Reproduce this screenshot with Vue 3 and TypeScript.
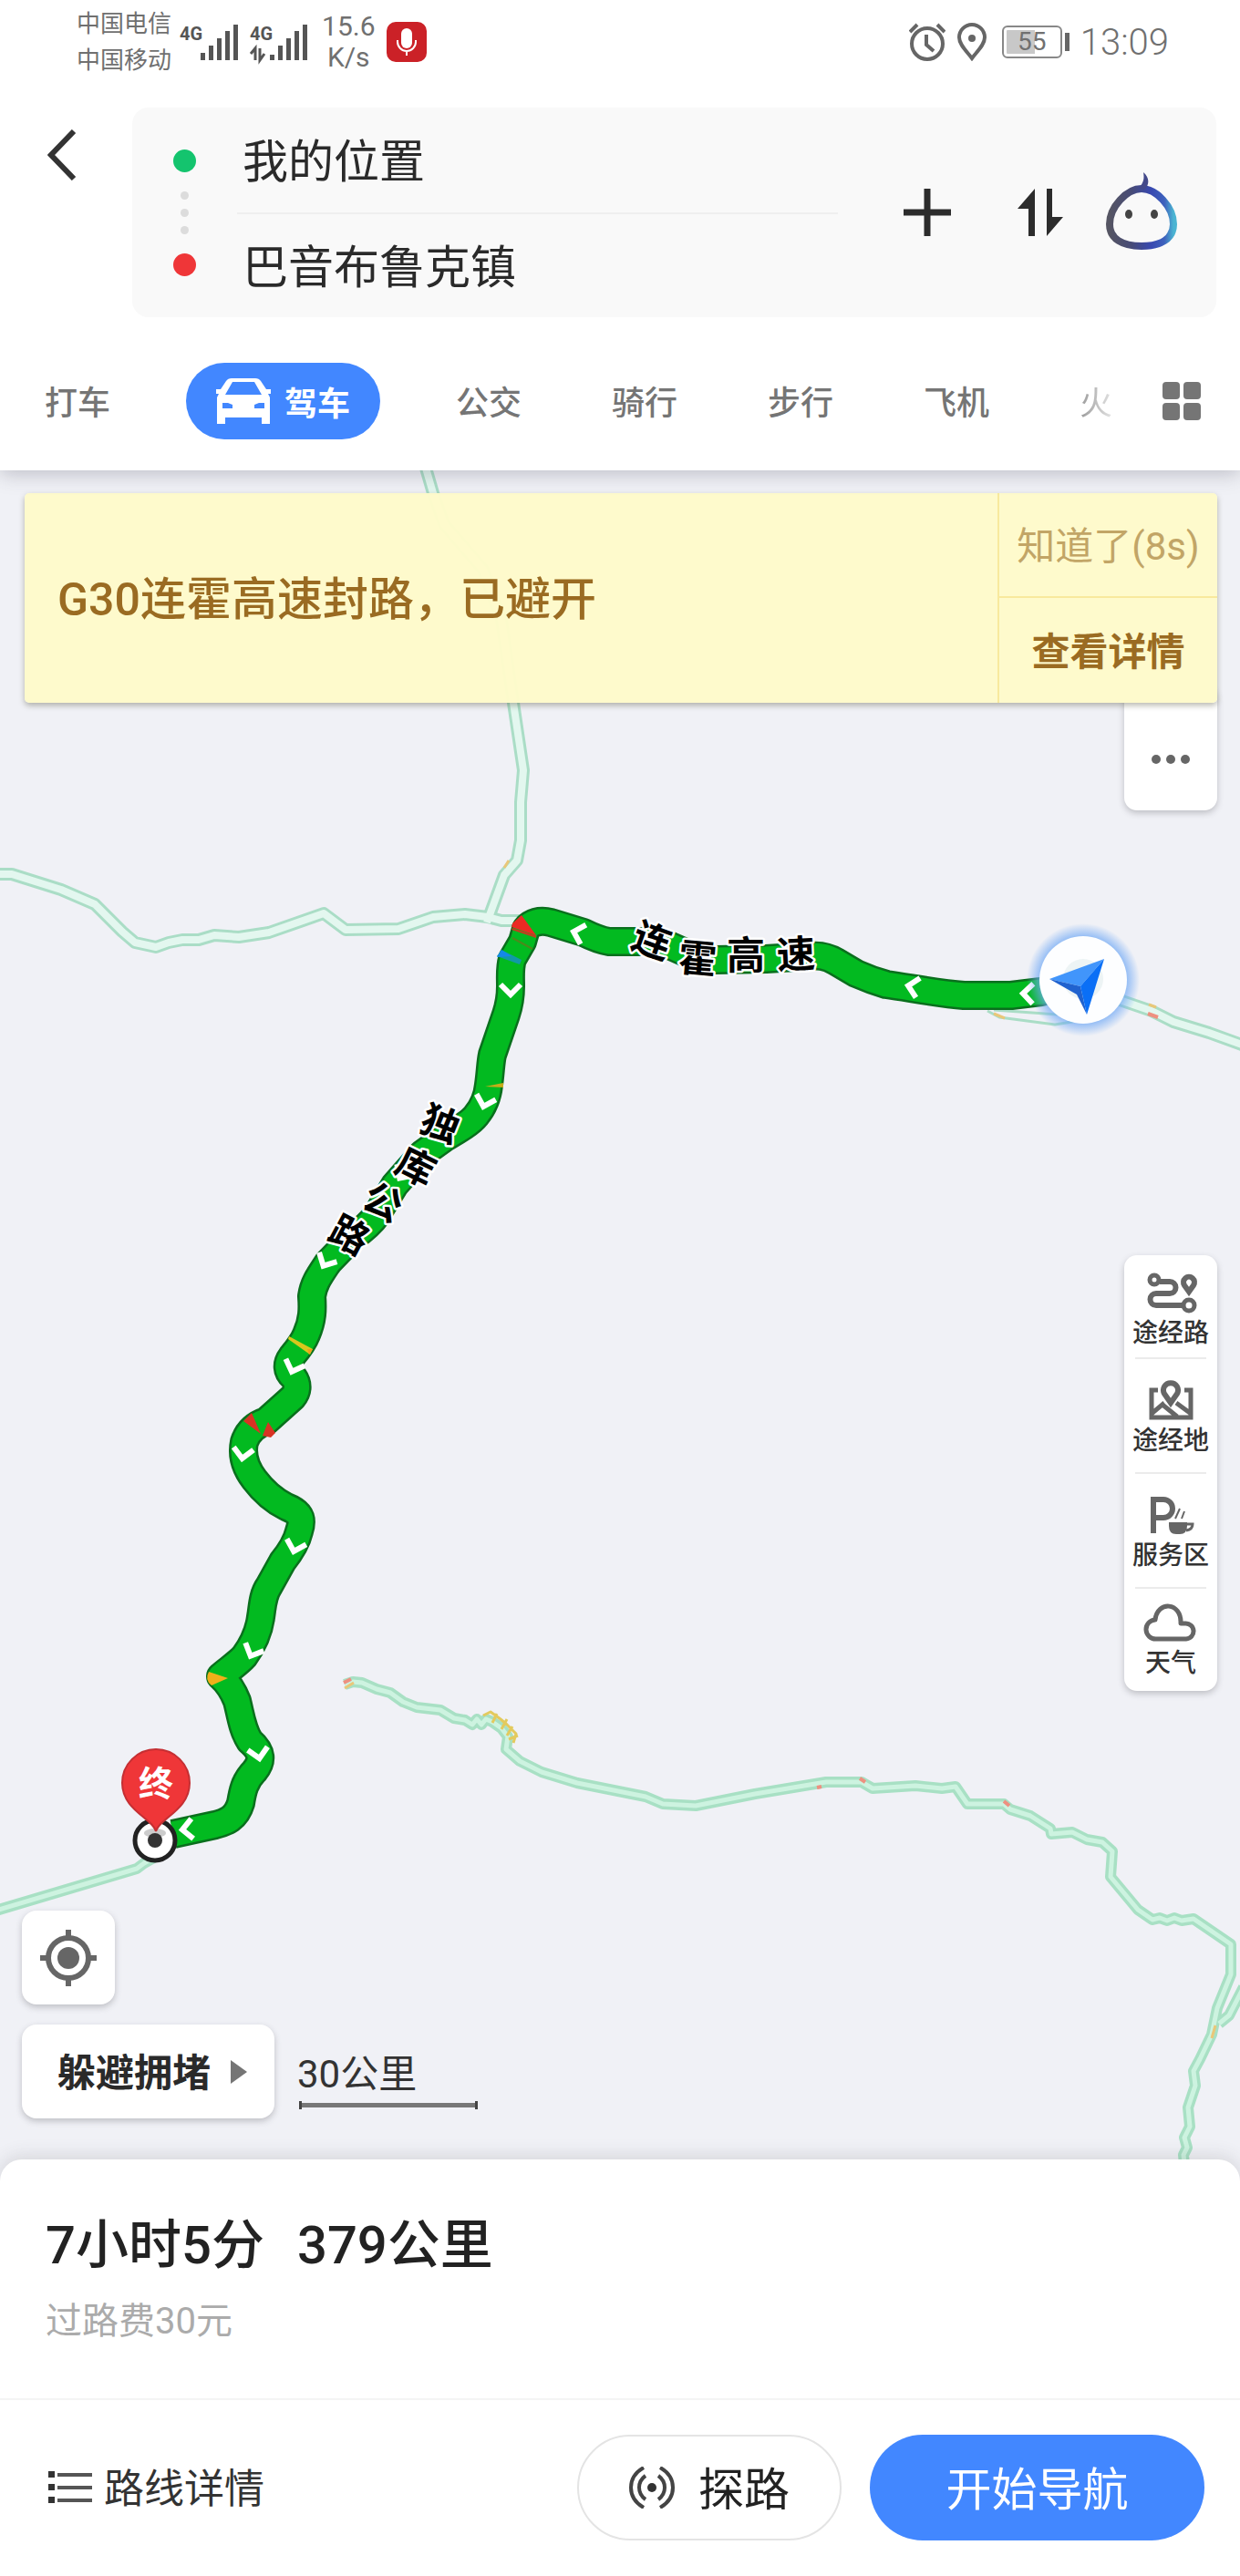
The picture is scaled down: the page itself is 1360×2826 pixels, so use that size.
<script setup lang="ts">
import { ref } from 'vue'

interface Tab { id: string; label: string }
interface Tool { id: string; label: string }
interface Arrow { x: number; y: number; a: number }
interface Glyph { c: string; x: number; y: number; a: number }

const origin = ref('我的位置')
const destination = ref('巴音布鲁克镇')
const active = ref('drive')

const tabs: Tab[] = [
  { id: 'taxi', label: '打车' },
  { id: 'drive', label: '驾车' },
  { id: 'bus', label: '公交' },
  { id: 'bike', label: '骑行' },
  { id: 'walk', label: '步行' },
  { id: 'plane', label: '飞机' },
  { id: 'train', label: '火' },
]

const tools: Tool[] = [
  { id: 'roads', label: '途经路' },
  { id: 'places', label: '途经地' },
  { id: 'service', label: '服务区' },
  { id: 'weather', label: '天气' },
]

const roads: string[] = [
  'M-10 959H13L67 976L104 992L134 1022L148 1034L171 1039L185 1034L200 1031H218L235 1026L262 1028L295 1023L355 1002L379 1020L437 1019L475 1006L510 1003L535 1006L550 1010H580',
  'M466 510L475 541L487 575L530 625L550 680L563 771L574 845L571 880V922L567 944L553 960L534 1012',
  'M1225 1096L1263 1109L1287 1121L1326 1133L1370 1149',
]

const lanes: string[] = [
  'M172 2036L158 2044L150 2050L-8 2097',
  'M378 1848L387 1845L397 1846L413 1853L428 1857L442 1867L457 1873L483 1876L498 1885L510 1887L518 1892L523 1886L528 1892L533 1886L540 1889L550 1896L557 1905L555 1919L570 1932L594 1944L633 1956L708 1971L727 1979L763 1981L828 1968L906 1955H945L957 1962L1004 1959L1033 1962L1048 1960L1061 1979H1101L1108 1985L1130 1992L1152 2006L1153 2012L1176 2010L1192 2018L1209 2021L1220 2031L1218 2059L1248 2095L1264 2106L1272 2104L1280 2107L1288 2104L1296 2107L1309 2105L1350 2133V2166L1335 2203L1329 2232L1316 2259L1309 2272L1311 2288L1303 2312L1305 2333L1299 2345L1302 2356L1298 2364L1300 2385',
  'M1364 2180L1348 2211L1337 2220',
]

const route =
  'M1165 1082L1142 1088L1109 1092H1057C1030 1090 1000 1084 972 1080C958 1076 948 1072 939 1068L917 1055C905 1048 897 1048 889 1049L840 1052L785 1053C772 1053 768 1052 763 1050L736 1038C726 1033 718 1033 708 1033H668C656 1031 648 1027 640 1023L604 1012C592 1009 582 1012 577 1019L573 1033L562 1052C559 1062 560 1070 560 1082C560 1094 558 1104 555 1113L540 1157C538 1166 538 1176 536 1190C535 1200 532 1212 522 1224C516 1232 500 1241 488 1248L463 1266L433 1300L413 1333C406 1343 397 1350 387 1357L360 1385C350 1400 344 1408 342 1422C343 1436 343 1448 336 1464C332 1474 325 1482 320 1488C314 1496 314 1504 322 1511C327 1518 327 1526 321 1533L292 1559C280 1563 272 1570 268 1582C265 1596 269 1610 279 1623C288 1635 300 1646 314 1653C332 1660 332 1668 328 1680C325 1693 318 1703 310 1713L295 1740C288 1750 288 1762 286 1774C284 1790 276 1806 268 1817C262 1824 250 1832 242 1839C250 1846 256 1856 260 1866C264 1882 266 1898 274 1910C288 1922 288 1932 279 1943C268 1954 266 1966 264 1978C259 1995 248 1999 236 2002L190 2012'

const arrows: Arrow[] = [
  { x: 1125, y: 1090, a: 92 },
  { x: 999, y: 1082, a: 102 },
  { x: 632, y: 1023, a: 106 },
  { x: 560, y: 1088, a: 0 },
  { x: 531, y: 1211, a: 16 },
  { x: 440, y: 1290, a: 34 },
  { x: 356, y: 1386, a: 28 },
  { x: 321, y: 1502, a: 20 },
  { x: 266, y: 1597, a: 8 },
  { x: 323, y: 1699, a: 16 },
  { x: 276, y: 1814, a: 24 },
  { x: 284, y: 1926, a: -10 },
  { x: 203, y: 2007, a: 84 },
]

const roadNames: Glyph[] = [
  { c: '连', x: 715, y: 1032, a: 20 },
  { c: '霍', x: 765, y: 1052, a: 5 },
  { c: '高', x: 818, y: 1048, a: 0 },
  { c: '速', x: 873, y: 1047, a: -3 },
  { c: '独', x: 483, y: 1233, a: 22 },
  { c: '库', x: 456, y: 1280, a: 26 },
  { c: '公', x: 420, y: 1319, a: 26 },
  { c: '路', x: 383, y: 1355, a: 28 },
]
</script>

<template>
  <div class="page">
    <header class="top">
      <div class="status">
        <div class="carriers"><span>中国电信</span><span>中国移动</span></div>
        <svg class="signal" width="64" height="48" viewBox="0 0 64 48">
          <text x="0" y="22" class="net">4G</text>
          <g fill="#555"><rect x="23" y="36" width="5" height="8" /><rect x="32" y="28" width="5" height="16" /><rect x="41" y="20" width="5" height="24" /><rect x="50" y="12" width="5" height="32" /><rect x="59" y="5" width="5" height="39" /></g>
        </svg>
        <svg class="signal second" width="64" height="48" viewBox="0 0 64 48">
          <text x="0" y="22" class="net">4G</text>
          <path d="M1 37L6 31V44M11 31V44L16 37" fill="none" stroke="#555" stroke-width="3" />
          <g fill="#555"><rect x="22" y="38" width="5" height="6" /><rect x="31" y="28" width="5" height="16" /><rect x="40" y="20" width="5" height="24" /><rect x="49" y="12" width="5" height="32" /><rect x="58" y="5" width="5" height="39" /></g>
        </svg>
        <div class="speed"><span>15.6</span><span>K/s</span></div>
        <svg width="44" height="44" viewBox="0 0 44 44">
          <rect width="44" height="44" rx="10" fill="#cb2127" />
          <rect x="16" y="7" width="12" height="22" rx="6" fill="#fff" />
          <path d="M12 20V22A10 10 0 0 0 32 22V20M22 32V37" fill="none" stroke="#fff" stroke-width="2" />
        </svg>
        <span class="grow"></span>
        <svg width="40" height="42" viewBox="0 0 40 42">
          <circle cx="20" cy="23" r="17" fill="none" stroke="#666" stroke-width="4" />
          <path d="M19 13V24L27 31M1 10L9 2M39 10L31 2" fill="none" stroke="#666" stroke-width="4" />
        </svg>
        <svg class="pin" width="32" height="42" viewBox="0 0 32 42">
          <path d="M16 39C10 31 2 24 2 16A14 14 0 0 1 30 16C30 24 22 31 16 39Z" fill="none" stroke="#666" stroke-width="4" />
          <circle cx="16" cy="17" r="4" fill="#666" />
        </svg>
        <div class="battery"><span>55</span></div>
        <time class="clock">13:09</time>
      </div>

      <div class="search">
        <button class="back" type="button" aria-label="返回">
          <svg width="32" height="56" viewBox="0 0 32 56"><path d="M29 2L4 28L29 54" fill="none" stroke="#333" stroke-width="6" /></svg>
        </button>
        <form class="card" @submit.prevent>
          <div class="marks">
            <i class="dot green"></i><i class="tiny"></i><i class="tiny"></i><i class="tiny"></i><i class="dot red"></i>
          </div>
          <div class="fields">
            <input v-model="origin" type="text" aria-label="起点" />
            <input v-model="destination" type="text" aria-label="终点" />
          </div>
          <button class="plus" type="button" aria-label="添加途经点">
            <svg width="52" height="52" viewBox="0 0 52 52"><path d="M26 0V52M0 26H52" stroke="#2c2c2c" stroke-width="7" /></svg>
          </button>
          <button class="swap" type="button" aria-label="交换起终点">
            <svg width="52" height="54" viewBox="0 0 52 54" fill="#2c2c2c"><path d="M20 1V53H13V23H1ZM33 1H39V32H51L33 53Z" /></svg>
          </button>
          <button class="bot" type="button" aria-label="语音助手">
            <svg width="80" height="88" viewBox="0 0 80 88">
              <defs>
                <linearGradient id="bot" x1="0" y1="0" x2="1" y2="0"><stop offset="0" stop-color="#555563" /><stop offset="0.35" stop-color="#474b78" /><stop offset="0.65" stop-color="#3848b0" /><stop offset="0.86" stop-color="#3e62bd" /><stop offset="1" stop-color="#4bb4d2" /></linearGradient>
              </defs>
              <path d="M40 18C56 18 75 38 75 57C75 73 61 81 40 81C19 81 5 73 5 57C5 38 24 18 40 18Z" fill="none" stroke="url(#bot)" stroke-width="8" />
              <path d="M37 17C43 11 43 6 42 0C49 6 49 14 43 19Z" fill="#43498a" />
              <ellipse cx="26" cy="46" rx="4" ry="5" fill="#444" /><ellipse cx="54" cy="46" rx="4" ry="5" fill="#444" />
            </svg>
          </button>
        </form>
      </div>

      <nav class="modes">
        <div class="tabs">
          <button
            v-for="tab in tabs" :key="tab.id" type="button"
            :class="['tab', { active: tab.id === active, fading: tab.id === 'train' }]"
            @click="active = tab.id"
          >
            <svg v-if="tab.id === 'drive'" width="60" height="50" viewBox="0 0 60 50">
              <path fill="currentColor" fill-rule="evenodd" d="M17 0H43Q47 0 49 3L55 12H60V17H57L59 21V50H50V43H10V50H1V21L3 17H0V12H5L11 3Q13 0 17 0ZM18 4L10 18H50L42 4ZM7 27V33H18V29L13 27ZM53 27H47L42 29V33H53Z" />
            </svg>
            <span>{{ tab.label }}</span>
          </button>
        </div>
        <button class="grid" type="button" aria-label="全部方式">
          <svg width="42" height="42" viewBox="0 0 42 42" fill="#757575"><rect width="19" height="19" rx="4" /><rect x="23" width="19" height="19" rx="4" /><rect y="23" width="19" height="19" rx="4" /><rect x="23" y="23" width="19" height="19" rx="4" /></svg>
        </button>
      </nav>
    </header>

    <main class="map">
      <svg class="canvas" viewBox="0 516 1360 1877" preserveAspectRatio="xMidYMin slice" aria-label="路线地图">
        <defs>
          <radialGradient id="glow"><stop offset="0.72" stop-color="#6fa8f5" stop-opacity="0.85" /><stop offset="1" stop-color="#6fa8f5" stop-opacity="0" /></radialGradient>
        </defs>
        <g fill="none" stroke-linejoin="round">
          <g stroke="#aaddc6" stroke-width="14"><path v-for="d in roads" :key="d" :d="d" /></g>
          <g stroke="#e3f7ef" stroke-width="8"><path v-for="d in roads" :key="d" :d="d" /></g>
          <g stroke="#a8e0c4" stroke-width="12"><path v-for="d in lanes" :key="d" :d="d" /></g>
          <g stroke="#cdf3e0" stroke-width="5"><path v-for="d in lanes" :key="d" :d="d" /></g>
          <path d="M1083 1109L1096 1116L1157 1124L1182 1120M1090 1108L1160 1113" stroke="#aaddc6" stroke-width="3" />
          <path d="M1090 1112L1102 1117M553 952L558 944M1260 1102L1268 1105M1329 2236L1333 2222M378 1852L388 1846" stroke="#e9c779" stroke-width="3" />
          <path d="M530 1882L538 1878L549 1886L556 1892L566 1902L563 1912M545 1880L540 1890M556 1886L550 1897M562 1894L556 1904M568 1904L558 1908" stroke="#e3ca5e" stroke-width="3" />
          <path d="M1259 1112L1270 1116M377 1846L385 1842M943 1951L949 1955M1101 1976L1107 1981M896 1961L901 1960" stroke="#ee9080" stroke-width="4" />
          <path :d="route" stroke="#0a6f1d" stroke-width="32" />
          <path :d="route" stroke="#02ba20" stroke-width="27" />
        </g>
        <path d="M562 1013L572 1004L588 1026L561 1017Z" fill="#ea2a24" />
        <path d="M562 1018L588 1026V1029L561 1020Z" fill="#bd4020" />
        <path d="M562 1029L584 1041" stroke="#4b8a1c" stroke-width="2" />
        <path d="M550 1042L572 1053L570 1058L545 1049Z" fill="#1199a5" /><path d="M550 1042L561 1049L545 1050Z" fill="#1588e8" />
        <path d="M532 1192L552 1188V1193Z" fill="#c6ac19" />
        <path d="M317 1466L343 1480L340 1486L316 1469Z" fill="#d9c61d" /><path d="M337 1480L343 1480L339 1486Z" fill="#ef9d1d" />
        <path d="M267 1559L276 1550L286 1573Z" fill="#d83324" /><path d="M288 1575L294 1560L302 1572L297 1577Z" fill="#d83324" />
        <path d="M229 1834L250 1841L232 1849Q224 1843 229 1834Z" fill="#f0b01a" />
        <g fill="none" stroke="#fff" stroke-width="6">
          <path v-for="r in arrows" :key="r.y" d="M-11 -8L0 3L11 -8" :transform="`translate(${r.x} ${r.y}) rotate(${r.a})`" />
        </g>
        <text v-for="g in roadNames" :key="g.c" class="road-name" :transform="`translate(${g.x} ${g.y}) rotate(${g.a})`" dy="15">{{ g.c }}</text>

        <circle cx="170" cy="2019" r="22" fill="#fff" stroke="#222" stroke-width="5" />
        <ellipse cx="170" cy="2011" rx="12" ry="5" fill="#ccc" />
        <circle cx="170" cy="2019" r="8" fill="#333" />
        <path d="M171 2009C168 1995 134 1986 134 1956A37 37 0 0 1 208 1956C208 1986 174 1995 171 2009Z" fill="#ef3638" stroke="#c52f33" stroke-width="2" />
        <text class="end-mark" x="171" y="1970">终</text>

        <circle cx="1188" cy="1075" r="62" fill="url(#glow)" />
        <circle cx="1188" cy="1075" r="48" fill="#fdfeff" />
        <circle cx="1188" cy="1074" r="22" fill="#edf4f5" />
        <path d="M1211 1052L1151 1074L1185 1082Z" fill="#4195fb" />
        <path d="M1151 1074L1185 1082L1192 1113L1181 1091Z" fill="#2062cf" />
        <path d="M1211 1052L1185 1082L1192 1113Z" fill="#0a6ff6" />
      </svg>

      <section class="notice">
        <p>G30连霍高速封路，已避开</p>
        <div class="choices">
          <button type="button" class="dismiss">知道了(8s)</button>
          <button type="button" class="detail">查看详情</button>
        </div>
      </section>

      <button class="more" type="button" aria-label="更多">
        <svg width="42" height="12" viewBox="0 0 42 12" fill="#666"><circle cx="5" cy="6" r="5" /><circle cx="21" cy="6" r="5" /><circle cx="37" cy="6" r="5" /></svg>
      </button>

      <div class="tools">
        <button v-for="tool in tools" :key="tool.id" class="tool" type="button">
          <svg v-if="tool.id === 'roads'" width="60" height="48" viewBox="0 0 60 48" fill="none" stroke="#666" stroke-width="5">
            <circle cx="12" cy="9" r="5" /><path d="M18 11H29A6 6 0 0 1 29 24H14A6 6 0 0 0 14 37H43" stroke-width="6" /><circle cx="50" cy="37" r="6" />
            <path d="M50 22L45 15A6 6 0 1 1 55 15Z" stroke-width="6" />
          </svg>
          <svg v-else-if="tool.id === 'places'" width="60" height="48" viewBox="0 0 60 48" fill="none" stroke="#666" stroke-width="5">
            <path d="M16 12H9V42H52V12H45M10 37L23 26M21 28L37 41M36 26L51 37" />
            <path d="M30 26L23 16A8 8 0 1 1 37 16Z" stroke-width="6" />
          </svg>
          <svg v-else-if="tool.id === 'service'" width="60" height="48" viewBox="0 0 60 48" fill="none" stroke="#666" stroke-width="5">
            <path d="M11 43V6H22A10 10 0 0 1 22 26H11" stroke-width="6" />
            <path d="M28 31H48V35Q48 44 40 44H36Q28 44 28 35Z" fill="#666" stroke="none" />
            <path d="M48 33H54Q54 39 47 40" stroke-width="3" /><path d="M35 27L40 16M42 27L45 19" stroke-width="2" />
          </svg>
          <svg v-else width="60" height="48" viewBox="0 0 60 48" fill="none" stroke="#666" stroke-width="5">
            <path d="M14 41A10 10 0 0 1 13 20C15 -1 42 0 41 24H46A8 8 0 0 1 47 41Z" stroke-linejoin="round" />
          </svg>
          <span>{{ tool.label }}</span>
        </button>
      </div>

      <div class="corner">
        <button class="locate" type="button" aria-label="定位">
          <svg width="64" height="64" viewBox="0 0 64 64" fill="none" stroke="#666" stroke-width="6">
            <circle cx="32" cy="32" r="22" /><circle cx="32" cy="32" r="12" fill="#666" stroke="none" /><path d="M32 1V9M32 55V63M1 32H9M55 32H63" />
          </svg>
        </button>
        <div class="bottom-row">
          <button class="avoid" type="button">
            <span>躲避拥堵</span>
            <svg width="18" height="26" viewBox="0 0 18 26"><path d="M0 0L18 13L0 26Z" fill="#757575" /></svg>
          </button>
          <div class="scale">
            <span>30公里</span>
            <i></i>
          </div>
        </div>
      </div>
    </main>

    <footer class="sheet">
      <div class="summary">
        <h1><span>7小时5分</span><span>379公里</span></h1>
        <p>过路费30元</p>
      </div>
      <div class="actions">
        <a href="#" class="steps" @click.prevent>
          <svg width="48" height="38" viewBox="0 0 48 38"><path d="M10 5H48M10 19H48M10 33H48" stroke="#555" stroke-width="4" /><path d="M0 1H7V8H0ZM0 15H7V22H0ZM0 29H7V36H0Z" fill="#333" /></svg>
          <span>路线详情</span>
        </a>
        <button class="probe" type="button">
          <svg width="50" height="46" viewBox="0 0 50 46" fill="none" stroke="#444" stroke-width="4">
            <circle cx="25" cy="23" r="5" fill="#333" stroke="none" />
            <path d="M16 1Q2 9 2 23T16 45M34 1Q48 9 48 23T34 45M18 10Q11 15 11 23T18 36M32 10Q39 15 39 23T32 36" />
          </svg>
          <span>探路</span>
        </button>
        <button class="start" type="button"><span>开始导航</span></button>
      </div>
    </footer>
  </div>
</template>

<style>
body {
  margin: 0;
  background: #fff;
}
</style>

<style scoped>
.page {
  display: flex;
  flex-direction: column;
  min-height: 100vh;
  font-family: Roboto, "Noto Sans CJK SC", sans-serif;
  color: #222;
  background: #fff;
  overflow: hidden;
}
.page *,
.page {
  box-sizing: border-box;
}
button,
input {
  margin: 0;
  padding: 0;
  border: 0;
  background: none;
  font: inherit;
  color: inherit;
}
svg {
  display: block;
  flex: none;
}

.top {
  position: relative;
  z-index: 2;
  padding: 6px 26px 34px;
  background: #fff;
  box-shadow: 0 4px 20px rgba(60, 60, 80, 0.28);
}
.status {
  display: flex;
  align-items: center;
  padding: 0 52px 0 58px;
  color: #707070;
}
.carriers {
  display: flex;
  flex-direction: column;
  margin-right: 9px;
  font-size: 26px;
  line-height: 40px;
}
.signal {
  overflow: visible;
}
.signal.second {
  margin-left: 13px;
}
.net {
  font-family: "Liberation Sans Narrow", Roboto, sans-serif;
  font-size: 20px;
  font-weight: 700;
  fill: #555;
}
.speed {
  display: flex;
  flex-direction: column;
  align-items: center;
  margin: 0 12px 0 15px;
  font-size: 30px;
  line-height: 34px;
}
.grow {
  flex: 1;
}
.pin {
  margin: 0 17px 0 13px;
}
.battery {
  position: relative;
  width: 66px;
  height: 36px;
  margin-right: 20px;
  border: 2px solid #888;
  border-radius: 6px;
  background: linear-gradient(90deg, #c8c8c8 55%, #fff 55%) content-box;
  padding: 3px;
  font-size: 28px;
  line-height: 26px;
  text-align: center;
}
.battery::after {
  content: "";
  position: absolute;
  top: 6px;
  right: -10px;
  width: 5px;
  height: 20px;
  background: #666;
}
.clock {
  font-size: 40px;
  font-weight: 300;
}

.search {
  display: flex;
  margin-top: 32px;
}
.back {
  display: flex;
  align-items: flex-start;
  width: 119px;
  padding: 24px 26px;
}
.card {
  display: flex;
  flex: 1;
  align-items: center;
  min-width: 0;
  padding-right: 42px;
  border-radius: 18px;
  background: #f9f9f9;
}
.marks {
  display: flex;
  flex-direction: column;
  align-items: center;
  gap: 10px;
  width: 115px;
}
.dot {
  width: 25px;
  height: 25px;
  border-radius: 50%;
}
.green {
  margin-bottom: 11px;
  background: #14c46e;
}
.red {
  margin-top: 11px;
  background: #ef3638;
}
.tiny {
  width: 9px;
  height: 9px;
  border-radius: 50%;
  background: #dcdcdc;
}
.fields {
  display: flex;
  flex: 1;
  flex-direction: column;
  min-width: 0;
}
.fields input {
  width: 100%;
  height: 115px;
  padding: 0 0 6px 6px;
  font-size: 50px;
  color: #2a2a2a;
  outline: none;
}
.fields input + input {
  border-top: 2px solid #efefef;
}
.plus {
  margin-left: 72px;
}
.swap {
  margin-left: 72px;
}
.bot {
  margin-left: 45px;
}

.modes {
  display: flex;
  align-items: center;
  margin-top: 50px;
  padding: 0 17px 0 23px;
}
.tabs {
  display: flex;
  flex: 1;
  align-items: center;
  gap: 99px;
  min-width: 0;
  overflow: hidden;
}
.tab {
  flex: none;
  height: 84px;
  padding-bottom: 3px;
  font-size: 36px;
  font-weight: 500;
  color: #757575;
}
.tab.active {
  display: flex;
  align-items: center;
  justify-content: center;
  gap: 15px;
  width: 213px;
  margin: 0 -16px;
  padding: 0;
  border-radius: 42px;
  font-weight: 700;
  color: #fff;
  background: #4287ff;
}
.tab.fading {
  font-weight: 400;
  color: transparent;
  background: linear-gradient(90deg, #999, #e4e4e4);
  background-clip: text;
}
.grid {
  margin-left: 20px;
}

.map {
  position: relative;
  display: flex;
  flex: 1;
  flex-direction: column;
  padding: 25px 25px 45px 24px;
  background: #f0f1f6;
}
.canvas {
  position: absolute;
  top: 0;
  left: 0;
  width: 100%;
  height: calc(100% + 24px);
  background: #f0f1f6;
}
.road-name {
  font-size: 42px;
  font-weight: 700;
  text-anchor: middle;
  fill: #000;
  stroke: #fff;
  stroke-width: 5px;
  stroke-linejoin: round;
  paint-order: stroke;
}
.end-mark {
  font-size: 38px;
  font-weight: 700;
  text-anchor: middle;
  fill: #fff;
}

.notice {
  position: relative;
  z-index: 1;
  display: flex;
  margin-left: 3px;
  border-radius: 5px;
  background: rgba(254, 250, 203, 0.98);
  box-shadow: 0 3px 6px rgba(80, 80, 60, 0.4);
  color: #9a6b22;
}
.notice p {
  flex: 1;
  align-self: center;
  margin: 0;
  padding: 0 0 6px 36px;
  font-size: 50px;
  font-weight: 500;
}
.choices {
  display: flex;
  flex-direction: column;
  width: 241px;
  border-left: 2px solid #f8e99d;
}
.choices button {
  height: 115px;
  padding-bottom: 4px;
  font-size: 42px;
}
.choices .dismiss {
  border-bottom: 2px solid #f8e99d;
  color: #c2a566;
}
.choices .detail {
  font-weight: 700;
}

.more,
.tools,
.locate,
.avoid {
  position: relative;
  background: #fff;
  box-shadow: 0 3px 7px rgba(60, 60, 70, 0.28);
}
.more {
  display: flex;
  align-items: center;
  justify-content: center;
  align-self: flex-end;
  width: 102px;
  height: 138px;
  margin-top: -20px;
  padding-top: 26px;
  border-radius: 14px;
}
.tools {
  display: flex;
  flex-direction: column;
  align-self: flex-end;
  width: 102px;
  margin: auto 0 241px;
  padding: 0 12px;
  border-radius: 14px;
}
.tool {
  display: flex;
  flex-direction: column;
  align-items: center;
  gap: 2px;
  padding: 22px 0 16px;
  border-bottom: 2px solid #ebebeb;
  font-size: 28px;
  font-weight: 500;
  line-height: 36px;
  color: #333;
  white-space: nowrap;
}
.tool:first-child {
  padding: 18px 0 8px;
}
.tool:last-child {
  padding: 14px 0 12px;
  border: 0;
}
.corner {
  position: relative;
  display: flex;
  flex-direction: column;
  align-items: flex-start;
  gap: 22px;
}
.locate {
  display: flex;
  align-items: center;
  justify-content: center;
  width: 102px;
  height: 103px;
  border-radius: 16px;
}
.bottom-row {
  display: flex;
  gap: 25px;
}
.avoid {
  display: flex;
  align-items: center;
  gap: 22px;
  height: 103px;
  padding: 0 30px 0 39px;
  border-radius: 16px;
  font-size: 42px;
  font-weight: 700;
  color: #2a2a2a;
}
.avoid span {
  padding-bottom: 4px;
}
.scale {
  padding-top: 30px;
  font-size: 42px;
  line-height: 50px;
  color: #333;
}
.scale span {
  display: block;
}
.scale i {
  display: block;
  width: 196px;
  height: 9px;
  margin: 4px 0 0 2px;
  border: solid #444;
  border-width: 0 3px;
  background: linear-gradient(#777, #777) center / 100% 5px no-repeat;
}

.sheet {
  position: relative;
  z-index: 1;
  border-radius: 24px 24px 0 0;
  background: #fff;
  box-shadow: 0 -3px 20px rgba(60, 60, 70, 0.16);
}
.summary {
  padding: 54px 50px 56px;
  border-bottom: 2px solid #f4f4f4;
}
.summary h1 {
  display: flex;
  gap: 36px;
  margin: 0;
  font-size: 58px;
  font-weight: 500;
  line-height: 80px;
}
.summary p {
  margin: 16px 0 0;
  font-size: 40px;
  line-height: 56px;
  color: #ababab;
}
.actions {
  display: flex;
  align-items: center;
  padding: 38px 39px 39px 53px;
}
.steps {
  display: flex;
  align-items: center;
  gap: 13px;
  margin-right: auto;
  font-size: 44px;
  color: #333;
  text-decoration: none;
}
.probe,
.start {
  display: flex;
  align-items: center;
  justify-content: center;
  height: 116px;
  border-radius: 58px;
  font-size: 50px;
}
.actions span {
  padding-bottom: 4px;
}
.probe {
  gap: 26px;
  width: 290px;
  margin-right: 31px;
  border: 2px solid #e4e4e4;
}
.start {
  width: 367px;
  color: #fff;
  background: #4287ff;
}
</style>
